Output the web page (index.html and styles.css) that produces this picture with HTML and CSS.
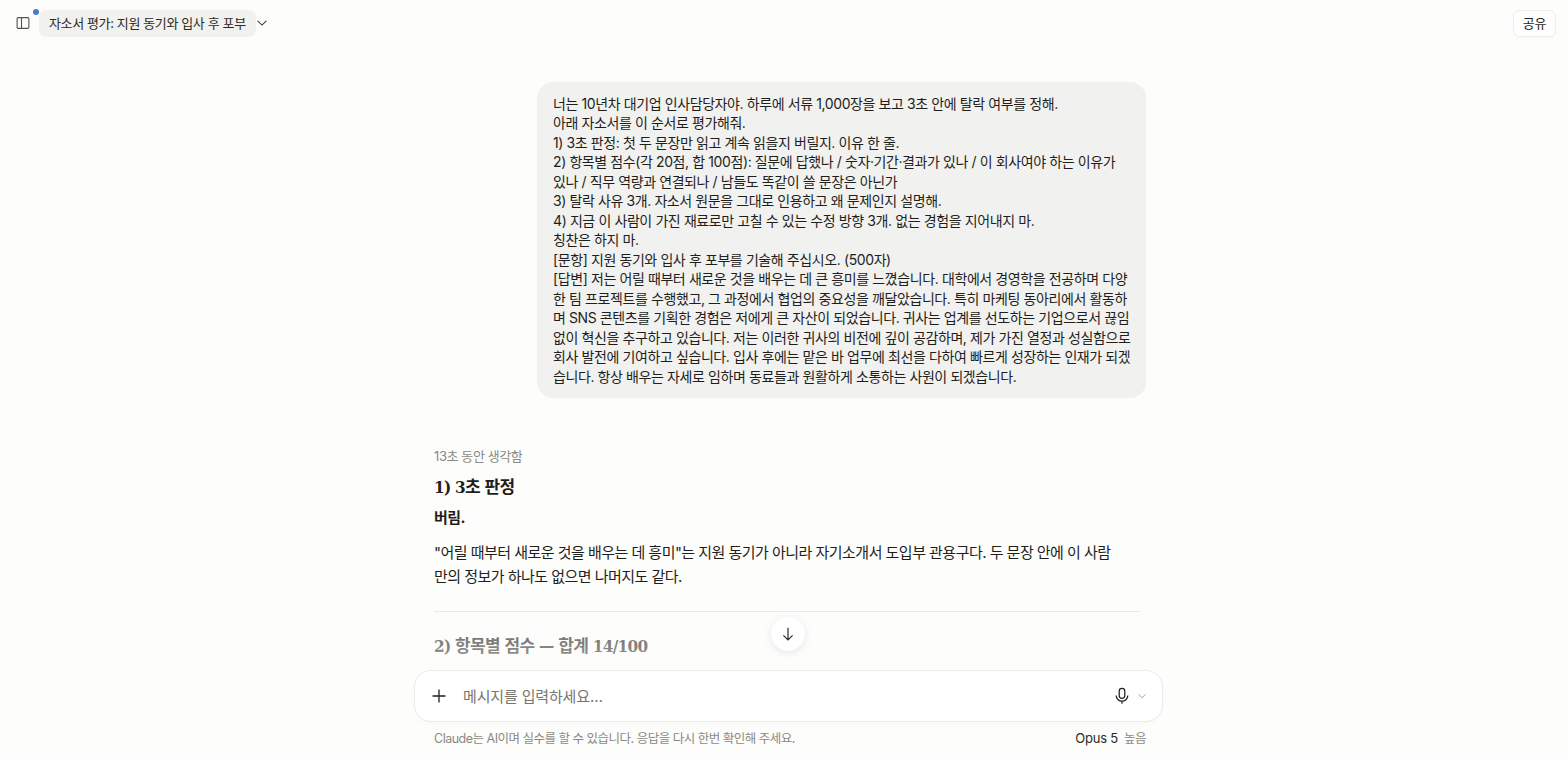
FILE: index.html
```html
<!DOCTYPE html>
<html lang="ko">
<head>
<meta charset="utf-8">
<title>자소서 평가: 지원 동기와 입사 후 포부</title>
<link rel="stylesheet" href="styles.css">
</head>
<body>
<div class="app">
  <header class="topbar">
    <div class="top-left">
      <button class="side-btn" aria-label="사이드바">
        <svg width="16" height="16" viewBox="0 0 16 16" fill="none" stroke="#55534e" stroke-width="1.1"><rect x="2.1" y="2.6" width="11.8" height="10.8" rx="1.2"/><path d="M6.5 2.6v10.8"/></svg>
        <span class="dot"></span>
      </button>
      <div class="title">자소서 평가: 지원 동기와 입사 후 포부</div>
      <svg class="title-caret" width="14" height="14" viewBox="0 0 14 14" fill="none" stroke="#3d3b37" stroke-width="1.1"><path d="M2.6 4.9 7 9.1l4.4-4.2"/></svg>
    </div>
    <button class="share">공유</button>
  </header>
  <main class="chat">
    <div class="column">
      <div class="bubble">너는 10년차 대기업 인사담당자야. 하루에 서류 1,000장을 보고 3초 안에 탈락 여부를 정해.<br>아래 자소서를 이 순서로 평가해줘.<br>1) 3초 판정: 첫 두 문장만 읽고 계속 읽을지 버릴지. 이유 한 줄.<br>2) 항목별 점수(각 20점, 합 100점): 질문에 답했나 / 숫자·기간·결과가 있나 / 이 회사여야 하는 이유가<br>있나 / 직무 역량과 연결되나 / 남들도 똑같이 쓸 문장은 아닌가<br>3) 탈락 사유 3개. 자소서 원문을 그대로 인용하고 왜 문제인지 설명해.<br>4) 지금 이 사람이 가진 재료로만 고칠 수 있는 수정 방향 3개. 없는 경험을 지어내지 마.<br>칭찬은 하지 마.<br>[문항] 지원 동기와 입사 후 포부를 기술해 주십시오. (500자)<br>[답변] 저는 어릴 때부터 새로운 것을 배우는 데 큰 흥미를 느꼈습니다. 대학에서 경영학을 전공하며 다양<br>한 팀 프로젝트를 수행했고, 그 과정에서 협업의 중요성을 깨달았습니다. 특히 마케팅 동아리에서 활동하<br>며 SNS 콘텐츠를 기획한 경험은 저에게 큰 자산이 되었습니다. 귀사는 업계를 선도하는 기업으로서 끊임<br>없이 혁신을 추구하고 있습니다. 저는 이러한 귀사의 비전에 깊이 공감하며, 제가 가진 열정과 성실함으로<br>회사 발전에 기여하고 싶습니다. 입사 후에는 맡은 바 업무에 최선을 다하여 빠르게 성장하는 인재가 되겠<br>습니다. 항상 배우는 자세로 임하며 동료들과 원활하게 소통하는 사원이 되겠습니다.</div>
      <div class="thought">13초 동안 생각함</div>
      <h2 class="heading">1) 3초 판정</h2>
      <p class="verdict">버림.</p>
      <p class="para">"어릴 때부터 새로운 것을 배우는 데 흥미"는 지원 동기가 아니라 자기소개서 도입부 관용구다. 두 문장 안에 이 사람<br>만의 정보가 하나도 없으면 나머지도 같다.</p>
      <hr class="rule">
      <h2 class="heading second">2) 항목별 점수 — 합계 14/100</h2>
    </div>
    <div class="fade"></div>
    <button class="scroll-btn" aria-label="아래로">
      <svg width="16" height="16" viewBox="0 0 16 16" fill="none" stroke="#2b2a27" stroke-width="1.2"><path d="M8 1.8v12M3.4 9.4 8 14l4.6-4.6"/></svg>
    </button>
  </main>
  <section class="dock">
    <div class="composer">
      <svg class="plus" width="16" height="16" viewBox="0 0 16 16" fill="none" stroke="#23221f" stroke-width="1.3"><path d="M8 1.5v13M1.5 8h13"/></svg>
      <div class="placeholder">메시지를 입력하세요…</div>
      <svg class="mic" width="18" height="18" viewBox="0 0 18 18" fill="none" stroke="#23221f" stroke-width="1.25"><rect x="6.2" y="1.4" width="5.6" height="10" rx="2.8"/><path d="M3.2 8.4a5.8 5.8 0 0 0 11.6 0M9 14.2v2.6"/></svg>
      <svg class="mic-caret" width="10" height="10" viewBox="0 0 10 10" fill="none" stroke="#a5a39d" stroke-width="1"><path d="M1.5 3.4 5 6.8l3.5-3.4"/></svg>
    </div>
    <div class="footer">
      <span>Claude는 AI이며 실수를 할 수 있습니다. 응답을 다시 한번 확인해 주세요.</span>
      <span class="model"><span class="model-name">Opus 5</span><span class="effort">높음</span></span>
    </div>
  </section>
</div>
</body>
</html>
```
FILE: styles.css
```css
* { box-sizing: border-box; }
html, body { margin: 0; height: 100%; overflow: hidden; }
body {
  background: #fdfdfb;
  color: #1f1e1b;
  font-family: "Inter", "Noto Sans CJK KR", "Noto Sans", sans-serif;
}
button { font: inherit; color: inherit; background: none; border: 0; padding: 0; }
.app { display: flex; flex-direction: column; height: 100vh; }
.topbar {
  display: flex; align-items: center; justify-content: space-between;
  height: 46px; padding: 0 12px 0 15px; flex: none;
}
.top-left { display: flex; align-items: center; }
.side-btn { position: relative; width: 16px; height: 16px; margin-right: 8px; display: flex; }
.dot {
  position: absolute; top: -6px; right: -8px; width: 6px; height: 6px;
  border-radius: 50%; background: #4a7cc9;
}
.title {
  font-size: 13px; letter-spacing: -.38px; line-height: 27px; height: 27px; width: 217px; padding: 0 10px;
  background: #f1f1ee; border-radius: 7px; white-space: nowrap; color: #2b2a27;
}
.title-caret { margin-left: -1px; }
.share {
  width: 43px; height: 27px; font-size: 13px; letter-spacing: -.3px; line-height: 25px;
  background: #fff; border: 1px solid #eeeeea; border-radius: 7px;
  box-shadow: 0 1px 2px rgba(0,0,0,.03);
}
.chat { flex: 1; min-height: 0; overflow: hidden; position: relative; }
.column { width: 712px; margin-left: 434px; padding-top: 36px; }
.bubble {
  width: 609px; margin-left: 103px; padding: 11.5px 16px 12px;
  background: #f1f1ef; border-radius: 16px;
  font-size: 14px; letter-spacing: -.4px; line-height: 19.5px; white-space: nowrap; color: #1f1e1b;
}
.thought { margin-top: 47.5px; font-size: 13px; letter-spacing: -.4px; line-height: 20px; color: #8b8983; }
.heading {
  margin: 8px 0 0; font-family: "DejaVu Serif Condensed", "Noto Sans CJK KR", serif;
  font-weight: 700; font-size: 17px; letter-spacing: -.7px; line-height: 26px; color: #1f1e1b;
}
.verdict { margin: 6px 0 0; font-size: 15px; letter-spacing: -.5px; line-height: 24px; font-weight: 700; }
.para { margin: 11px 0 0; font-size: 15px; letter-spacing: -.53px; line-height: 24px; white-space: nowrap; }
.rule { margin: 22px 6px 0 0; border: 0; border-top: 1px solid #e8e8e4; }
.second { margin-top: 21px; }
.fade {
  position: absolute; left: 0; right: 0; bottom: 0; height: 40px;
  background: linear-gradient(to bottom, rgba(253,253,251,.35), rgba(253,253,251,.5) 60%, #fdfdfb 85%);
  pointer-events: none;
}
.scroll-btn {
  position: absolute; left: 771px; bottom: 19px; width: 34px; height: 34px;
  background: #fff; border-radius: 50%;
  display: flex; align-items: center; justify-content: center;
  box-shadow: 0 2px 8px rgba(0,0,0,.09);
}
.dock { flex: none; height: 89px; padding-left: 414px; }
.composer {
  width: 749px; height: 52px; background: #fff; border-radius: 17px;
  border: 1px solid #ecece8; box-shadow: 0 1px 4px rgba(0,0,0,.03);
  display: flex; align-items: center; padding: 0 15px 1px 16px;
}
.placeholder { flex: 1; margin-left: 16px; font-size: 15px; letter-spacing: -.15px; color: #77756f; white-space: nowrap; }
.mic { margin-right: 6px; }
.footer {
  width: 712px; margin: 6px 0 0 20px; display: flex; justify-content: space-between;
  font-size: 12.5px; letter-spacing: -.5px; line-height: 21px; color: #8b8983; white-space: nowrap;
}
.model { display: flex; gap: 6px; }
.model-name { color: #2b2a27; font-size: 13px; letter-spacing: -.2px; }
.effort { color: #8b8983; }
```
